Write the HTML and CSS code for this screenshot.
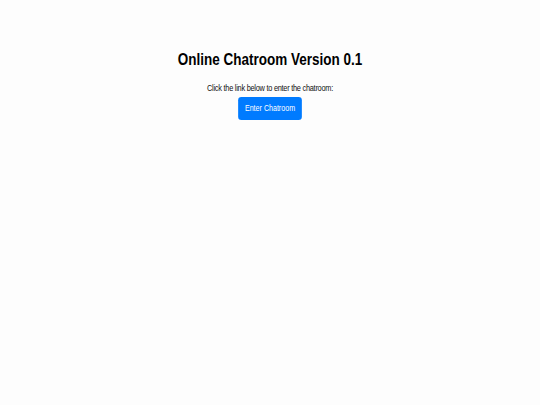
FILE: index.html
```html
<!DOCTYPE html>
<html>
<head>
<meta charset="utf-8">
<link rel="stylesheet" href="styles.css">
</head>
<body>
<main class="page">
  <h1 class="title">Online Chatroom Version 0.1</h1>
  <p class="intro">Click the link below to enter the chatroom:</p>
  <a class="btn" href="#">Enter Chatroom</a>
</main>
</body>
</html>
```
FILE: styles.css
```css
html, body {
  margin: 0;
  padding: 0;
  background: #fdfdfd;
}
body {
  font-family: "Liberation Sans", Arial, sans-serif;
  color: #000;
}
.page {
  display: flex;
  flex-direction: column;
  align-items: center;
  padding-top: 48.5px;
  transform: scaleX(0.817);
  transform-origin: 50% 0;
}
.title {
  margin: 0;
  font-size: 16.5px;
  font-weight: bold;
  line-height: 20px;
}
.intro {
  margin: 14px 0 0;
  font-size: 9px;
  line-height: 10px;
  letter-spacing: -0.3px;
  color: #111;
}
.btn {
  margin-top: 4.5px;
  display: inline-block;
  background: #007bff;
  color: #fff;
  text-decoration: none;
  font-size: 8.7px;
  line-height: 11px;
  padding: 6px 8.5px;
  border-radius: 4px / 3.3px;
}
```
